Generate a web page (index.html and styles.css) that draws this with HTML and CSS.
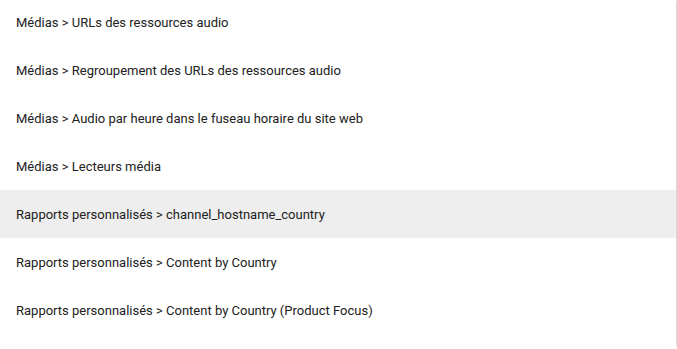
FILE: index.html
```html
<!DOCTYPE html>
<html lang="fr">
<head>
  <meta charset="UTF-8" />
  <title>Rapports</title>
  <link rel="stylesheet" href="styles.css">
</head>
<body>
  <div class="card">
    <ul class="list">
      <li class="item">Médias &gt; URLs des ressources audio</li>
      <li class="item">Médias &gt; Regroupement des URLs des ressources audio</li>
      <li class="item">Médias &gt; Audio par heure dans le fuseau horaire du site web</li>
      <li class="item">Médias &gt; Lecteurs média</li>
      <li class="item active">Rapports personnalisés &gt; channel_hostname_country</li>
      <li class="item">Rapports personnalisés &gt; Content by Country</li>
      <li class="item">Rapports personnalisés &gt; Content by Country (Product Focus)</li>
    </ul>
  </div>
</body>
</html>
```

FILE: styles.css
```css
* {
  margin: 0;
  padding: 0;
  box-sizing: border-box;
}

body {
  background: #fff;
  font-family: Roboto, "Liberation Sans", sans-serif;
  overflow: hidden;
}

.card {
  width: 676px;
  height: 346px;
  background: #fff;
  box-shadow: 0 1px 2px rgba(0, 0, 0, 0.3), 0 1px 3px 1px rgba(0, 0, 0, 0.1);
  overflow: hidden;
}

.list {
  list-style: none;
  margin-top: -2px;
}

.item {
  height: 48px;
  display: flex;
  align-items: center;
  padding-left: 16px;
  font-size: 13px;
  color: #212121;
}

.item.active {
  background: #eeeeee;
}
```
